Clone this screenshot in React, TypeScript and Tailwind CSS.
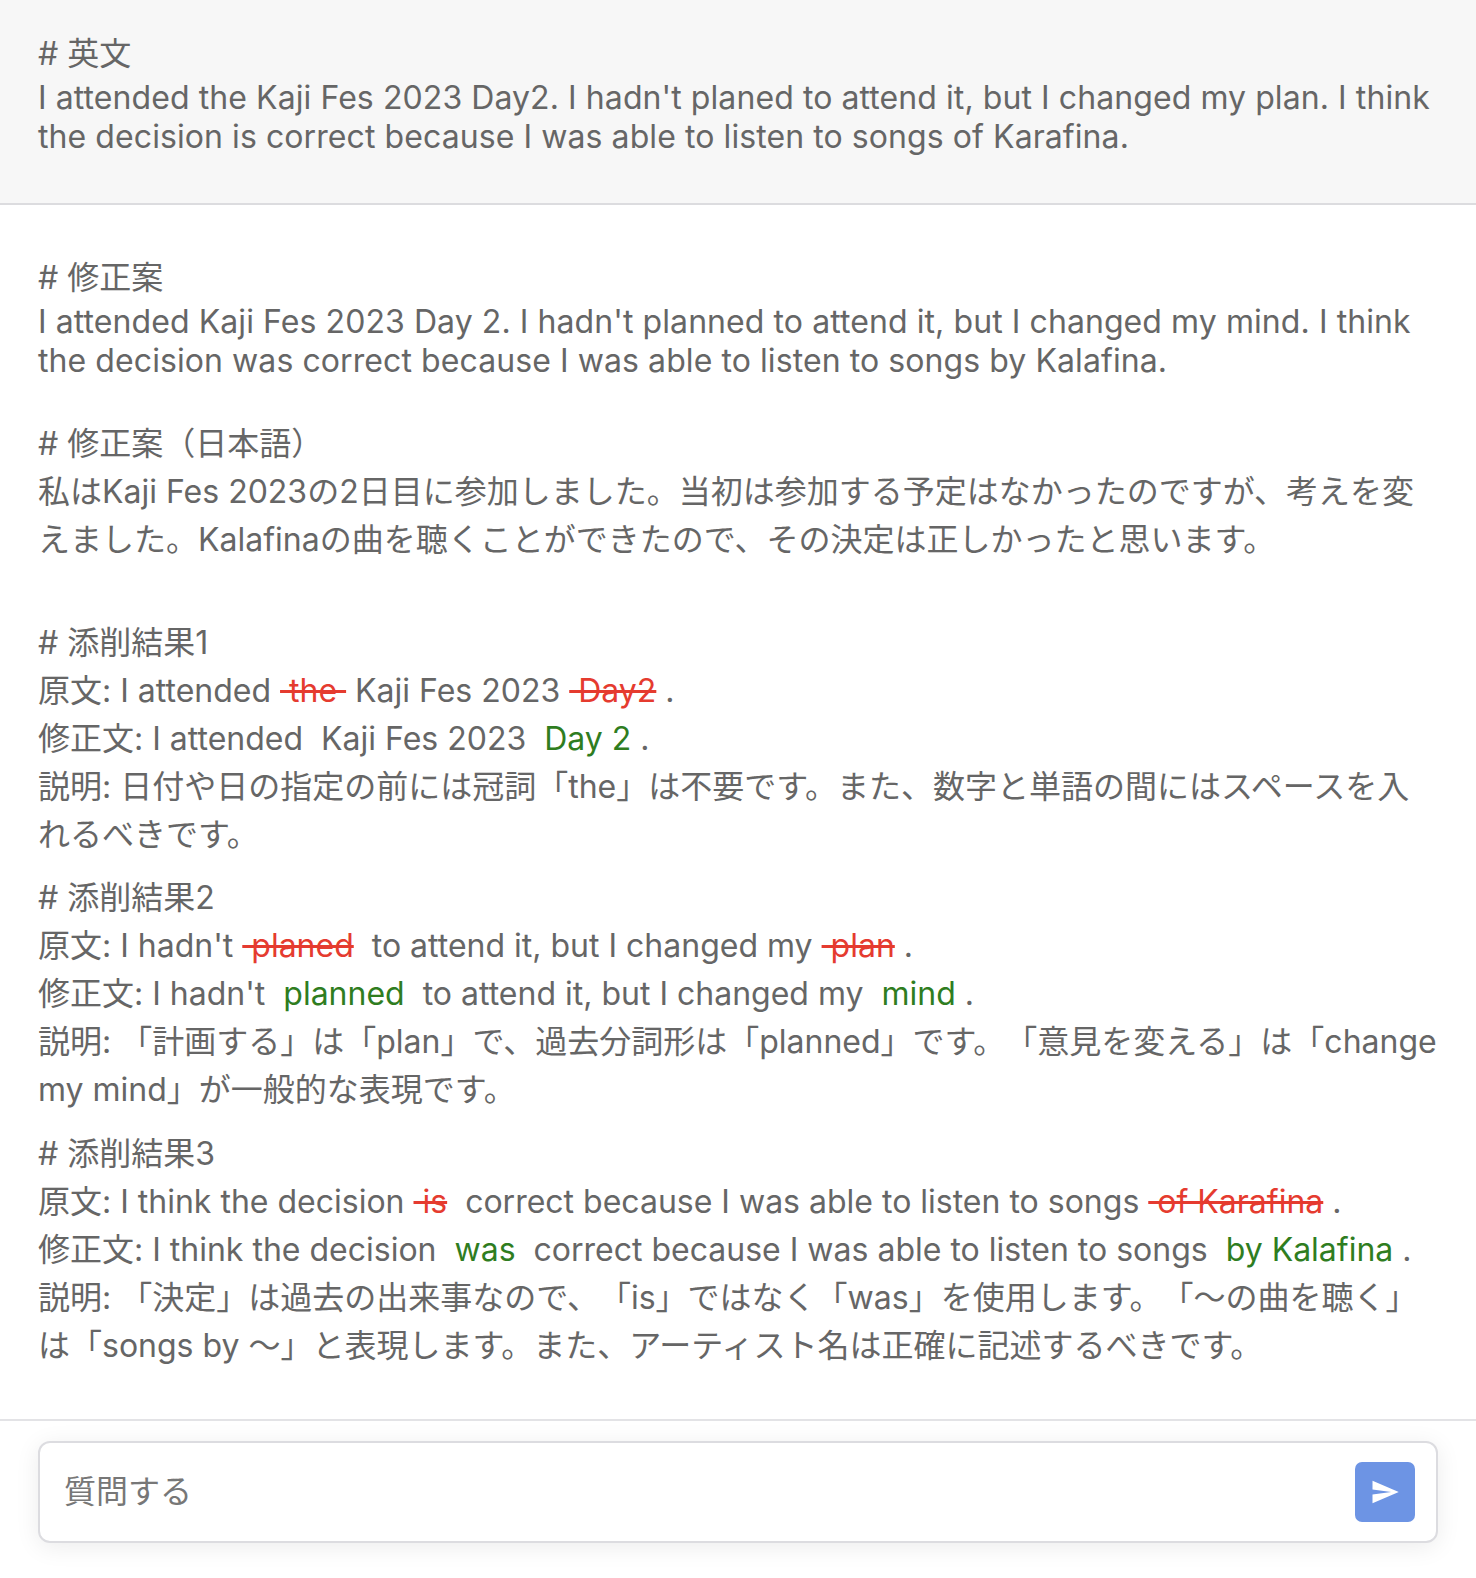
import React from "react";

const FONT = { fontFamily: 'Inter, "Noto Sans CJK JP", sans-serif' };

const Del = ({ children }: { children: string }) => (
    <span className="text-[#e53b2f] line-through decoration-[#e53b2f]">{children}</span>
);

const Ins = ({ children }: { children: string }) => (
    <span className="text-[#2f7d1f]">{children}</span>
);

const Heading = ({ children }: { children: React.ReactNode }) => (
    <div className="leading-[48px] whitespace-pre-wrap">{children}</div>
);

const Correction = ({
    title,
    original,
    fixed,
    note,
    className,
}: {
    title: string;
    original: React.ReactNode;
    fixed: React.ReactNode;
    note: string;
    className?: string;
}) => (
    <div className={className}>
        <Heading>{title}</Heading>
        <div className="leading-[48px] whitespace-pre-wrap">
            <div>{original}</div>
            <div>{fixed}</div>
            <div>{note}</div>
        </div>
    </div>
);

const SendIcon = () => (
    <svg viewBox="0 0 24 24" width="30" height="30" fill="white">
        <path d="M2.01 21L23 12 2.01 3 2 10l15 2-15 2z" />
    </svg>
);

export default function App() {
    return (
        <div
            className="min-h-[1578px] flex flex-col bg-white text-[32px] text-[#666] [text-spacing-trim:space-all]"
            style={FONT}
        >
            <section className="bg-[#f7f7f7] border-b-2 border-[#dcdcdf] px-[38px] pt-[30px] pb-[47px]">
                <Heading># 英文</Heading>
                <p className="leading-[39px] tracking-[0.08px]">
                    I attended the Kaji Fes 2023 Day2. I hadn't planed to attend it, but I changed my plan. I think
                    the decision is correct because I was able to listen to songs of Karafina.
                </p>
            </section>

            <main className="flex-1 px-[38px] pt-[49px] pb-[48px]">
                <Heading># 修正案</Heading>
                <p className="leading-[39px] tracking-[0.08px]">
                    I attended Kaji Fes 2023 Day 2. I hadn't planned to attend it, but I changed my mind. I think
                    the decision was correct because I was able to listen to songs by Kalafina.
                </p>

                <div className="mt-[40px]">
                    <Heading># 修正案（日本語）</Heading>
                    <p className="leading-[48px]">
                        私はKaji Fes 2023の2日目に参加しました。当初は参加する予定はなかったのですが、考えを変えました。Kalafinaの曲を聴くことができたので、その決定は正しかったと思います。
                    </p>
                </div>

                <Correction
                    className="mt-[55px]"
                    title="# 添削結果1"
                    original={
                        <>
                            {"原文: I attended "}
                            <Del>{" the "}</Del>
                            {" Kaji Fes 2023 "}
                            <Del>{" Day2"}</Del>
                            {" ."}
                        </>
                    }
                    fixed={
                        <>
                            {"修正文: I attended  Kaji Fes 2023  "}
                            <Ins>Day 2</Ins>
                            {" ."}
                        </>
                    }
                    note="説明: 日付や日の指定の前には冠詞「the」は不要です。また、数字と単語の間にはスペースを入れるべきです。"
                />

                <Correction
                    className="mt-[15px]"
                    title="# 添削結果2"
                    original={
                        <>
                            {"原文: I hadn't "}
                            <Del>{" planed"}</Del>
                            {"  to attend it, but I changed my "}
                            <Del>{" plan"}</Del>
                            {" ."}
                        </>
                    }
                    fixed={
                        <>
                            {"修正文: I hadn't  "}
                            <Ins>planned</Ins>
                            {"  to attend it, but I changed my  "}
                            <Ins>mind</Ins>
                            {" ."}
                        </>
                    }
                    note="説明: 「計画する」は「plan」で、過去分詞形は「planned」です。「意見を変える」は「change my mind」が一般的な表現です。"
                />

                <Correction
                    className="mt-[16px]"
                    title="# 添削結果3"
                    original={
                        <>
                            {"原文: I think the decision "}
                            <Del>{" is"}</Del>
                            {"  correct because I was able to listen to songs "}
                            <Del>{" of Karafina"}</Del>
                            {" ."}
                        </>
                    }
                    fixed={
                        <>
                            {"修正文: I think the decision  "}
                            <Ins>was</Ins>
                            {"  correct because I was able to listen to songs  "}
                            <Ins>by Kalafina</Ins>
                            {" ."}
                        </>
                    }
                    note="説明: 「決定」は過去の出来事なので、「is」ではなく「was」を使用します。「〜の曲を聴く」は「songs by 〜」と表現します。また、アーティスト名は正確に記述するべきです。"
                />
            </main>

            <footer className="border-t-2 border-[#e3e3e6] px-[38px] pt-[20px] pb-[35px]">
                <div className="h-[102px] flex items-center border-2 border-[#dcdce0] rounded-[12px] bg-white pl-[24px] pr-[21px] shadow-[0_4px_24px_rgba(0,0,0,0.08)]">
                    <input
                        className="flex-1 bg-transparent outline-none text-[32px] text-[#666] placeholder:text-[#777]"
                        style={FONT}
                        placeholder="質問する"
                    />
                    <button className="w-[60px] h-[60px] rounded-[7px] bg-[#6d94e4] flex items-center justify-center">
                        <SendIcon />
                    </button>
                </div>
            </footer>
        </div>
    );
}
